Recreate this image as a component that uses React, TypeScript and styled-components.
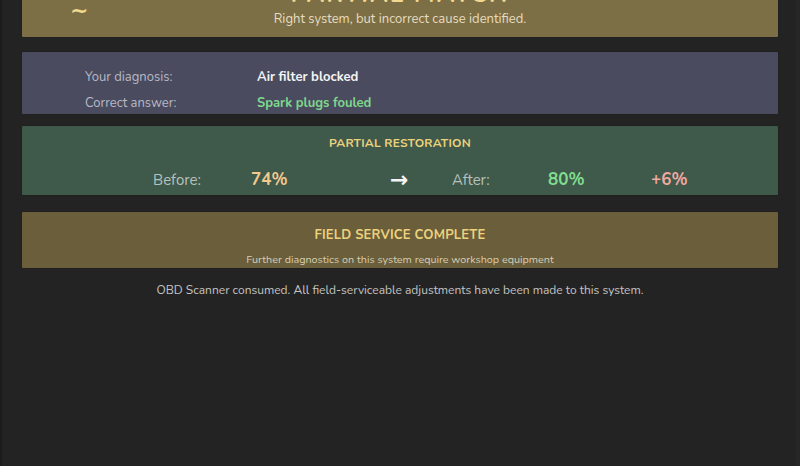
import React from "react";
import styled, { createGlobalStyle } from "styled-components";

const Global = createGlobalStyle`
  html, body { margin: 0; padding: 0; background: #232323; overflow: hidden; }
  body { font-family: "Nunito", "Lato", "Noto Sans", sans-serif; }
`;

const Page = styled.div`
  width: 800px;
  height: 466px;
  box-sizing: border-box;
  background: #232323;
  border-left: 2px solid #1c1c1c;
  border-right: 4px solid #262626;
  padding: 0 18px 0 20px;
  overflow: hidden;
`;

const Scroller = styled.div`
  margin-top: -34px;
  display: flex;
  flex-direction: column;
`;

const Card = styled.div<{ $bg: string; $mt: number }>`
  background: ${(p) => p.$bg};
  margin-top: ${(p) => p.$mt}px;
  border-radius: 1px;
  box-shadow: 0 0 0 1px rgba(0, 0, 0, 0.08);
`;

const Banner = styled(Card)`
  position: relative;
  height: 71px;
  box-sizing: border-box;
  padding-top: 14px;
  display: flex;
  flex-direction: column;
  align-items: center;
`;

const BannerIcon = styled.span`
  position: absolute;
  left: 48px;
  top: 32px;
  font-size: 22px;
  color: #f2d890;
  font-family: "DejaVu Sans", sans-serif;
  font-weight: bold;
`;

const BannerTitle = styled.div`
  font-size: 24px;
  font-weight: 700;
  letter-spacing: 2px;
  color: #f2d890;
  line-height: 28px;
`;

const BannerSub = styled.div`
  margin-top: 2px;
  font-size: 13px;
  color: #e6dcc0;
`;

const DiagCard = styled(Card)`
  height: 62px;
  box-sizing: border-box;
  padding: 16px 0 0 63px;
  display: grid;
  grid-template-columns: 172px auto;
  row-gap: 8px;
  align-content: start;
`;

const DiagLabel = styled.div`
  font-size: 13px;
  color: #b9b9c4;
  line-height: 18px;
`;

const DiagValue = styled.div<{ $c: string }>`
  font-size: 13px;
  font-weight: 700;
  color: ${(p) => p.$c};
  line-height: 18px;
`;

const RestCard = styled(Card)`
  height: 69px;
  box-sizing: border-box;
  padding-top: 9px;
  display: flex;
  flex-direction: column;
  align-items: center;
`;

const SectionTitle = styled.div<{ $size: number }>`
  font-size: ${(p) => p.$size}px;
  font-weight: 700;
  color: #ecd27c;
  letter-spacing: 0.2px;
  line-height: 16px;
`;

const StatRow = styled.div`
  width: 100%;
  margin-top: 19px;
  display: grid;
  grid-template-columns: 131px 98px 139px 62px 96px 103px auto;
  align-items: center;
  line-height: 20px;
`;

const StatLabel = styled.span`
  font-size: 15px;
  color: #b6c1bb;
`;

const StatValue = styled.span<{ $c: string }>`
  font-size: 17px;
  font-weight: 700;
  color: ${(p) => p.$c};
`;

const Arrow = styled.span`
  font-size: 22px;
  color: #f4f4f4;
  font-family: "DejaVu Sans", sans-serif;
  font-weight: bold;
  line-height: 20px;
`;

const FieldCard = styled(Card)`
  height: 56px;
  box-sizing: border-box;
  padding-top: 15px;
  display: flex;
  flex-direction: column;
  align-items: center;
`;

const FieldSub = styled.div`
  margin-top: 9px;
  font-size: 10.8px;
  color: #d6cdb3;
`;

const Footer = styled.div`
  margin-top: 14px;
  text-align: center;
  font-size: 12px;
  color: #c4c4c4;
`;

export default function App() {
  return (
    <>
      <Global />
      <Page>
        <Scroller>
          <Banner $bg="#7c6f45" $mt={0}>
            <BannerIcon>~</BannerIcon>
            <BannerTitle>PARTIAL MATCH</BannerTitle>
            <BannerSub>Right system, but incorrect cause identified.</BannerSub>
          </Banner>
          <DiagCard $bg="#4a4b5f" $mt={15}>
            <DiagLabel>Your diagnosis:</DiagLabel>
            <DiagValue $c="#f4f4f4">Air filter blocked</DiagValue>
            <DiagLabel>Correct answer:</DiagLabel>
            <DiagValue $c="#7ed88c">Spark plugs fouled</DiagValue>
          </DiagCard>
          <RestCard $bg="#3f594b" $mt={12}>
            <SectionTitle $size={12}>PARTIAL RESTORATION</SectionTitle>
            <StatRow>
              <span />
              <StatLabel>Before:</StatLabel>
              <StatValue $c="#f3c98c">74%</StatValue>
              <Arrow>→</Arrow>
              <StatLabel>After:</StatLabel>
              <StatValue $c="#80df8e">80%</StatValue>
              <StatValue $c="#efa9a2">+6%</StatValue>
            </StatRow>
          </RestCard>
          <FieldCard $bg="#6a5e3b" $mt={17}>
            <SectionTitle $size={13}>FIELD SERVICE COMPLETE</SectionTitle>
            <FieldSub>Further diagnostics on this system require workshop equipment</FieldSub>
          </FieldCard>
          <Footer>OBD Scanner consumed. All field-serviceable adjustments have been made to this system.</Footer>
        </Scroller>
      </Page>
    </>
  );
}
